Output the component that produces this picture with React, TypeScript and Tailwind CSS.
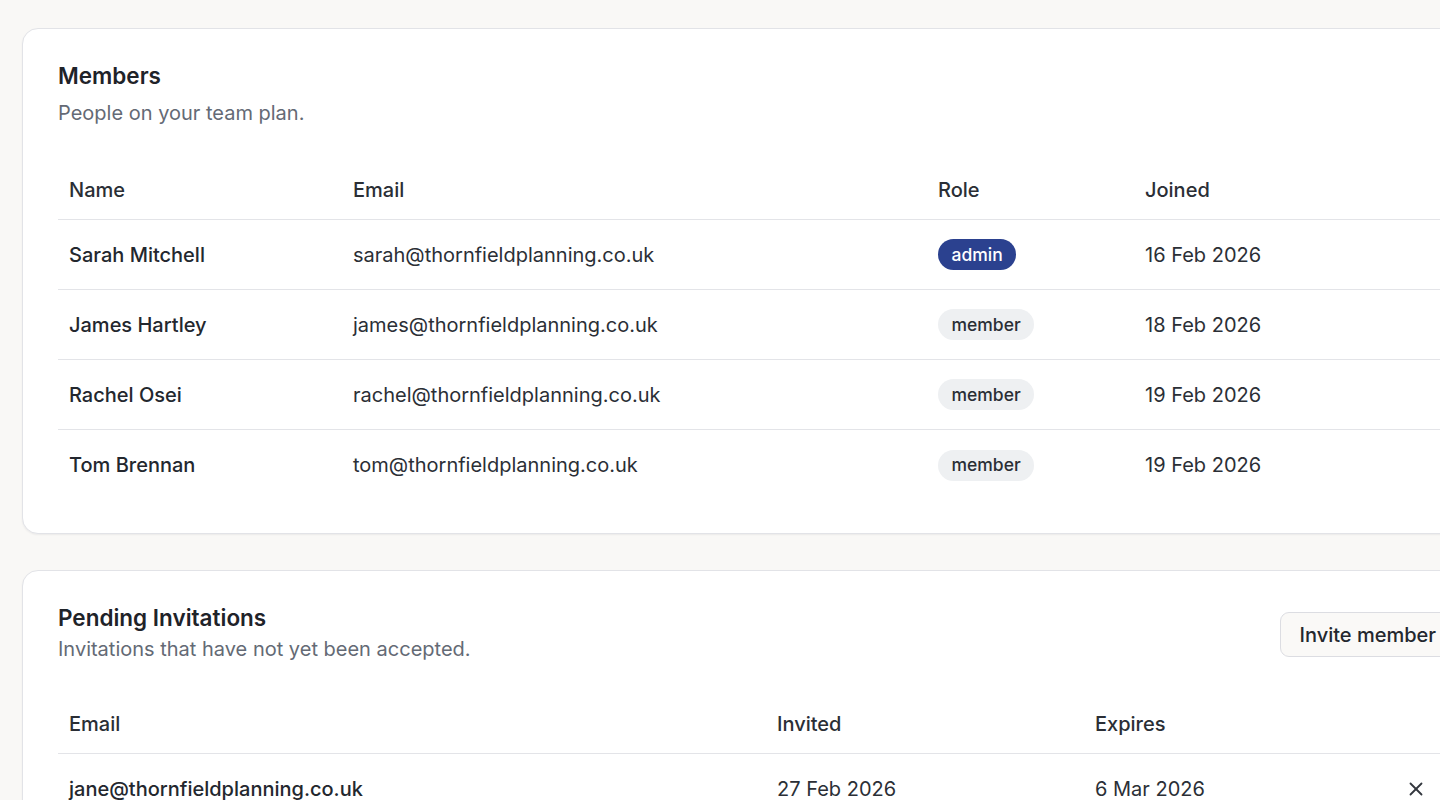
import React from "react";

const members = [
  { name: "Sarah Mitchell", email: "sarah@thornfieldplanning.co.uk", role: "admin", joined: "16 Feb 2026" },
  { name: "James Hartley", email: "james@thornfieldplanning.co.uk", role: "member", joined: "18 Feb 2026" },
  { name: "Rachel Osei", email: "rachel@thornfieldplanning.co.uk", role: "member", joined: "19 Feb 2026" },
  { name: "Tom Brennan", email: "tom@thornfieldplanning.co.uk", role: "member", joined: "19 Feb 2026" },
];

const invites = [{ email: "jane@thornfieldplanning.co.uk", invited: "27 Feb 2026", expires: "6 Mar 2026" }];

function XIcon() {
  return (
    <svg width="22" height="22" viewBox="0 0 24 24" fill="none" stroke="#33373e" strokeWidth="2" strokeLinecap="round" strokeLinejoin="round">
      <path d="M18 6 6 18" />
      <path d="m6 6 12 12" />
    </svg>
  );
}

export default function App() {
  return (
    <div
      className="min-h-screen w-full overflow-hidden bg-[#f9f8f6] pl-[22px] pt-[28px] text-[#1f2937]"
      style={{ fontFamily: "Inter, 'Noto Sans', sans-serif" }}
    >
      <div className="flex w-[1469px] flex-col gap-[36px]">
        {/* Members card */}
        <section className="rounded-[16px] border border-[#e2e3e7] bg-white px-[35px] pb-[33px] pt-[33px] shadow-[0_1px_2px_rgba(16,24,40,0.06)]">
          <h2 className="text-[22.5px] font-semibold leading-[28px] text-[#1f2329]">Members</h2>
          <p className="mt-[9px] text-[20px] leading-[28px] text-[#646a75]">People on your team plan.</p>
          <div className="mt-[34px] text-[20px] leading-[28px]">
            <div className="grid h-[59px] grid-cols-[284px_585px_207px_1fr] items-center border-b border-[#e3e4e8] font-medium text-[#2a2e35]">
              <div className="px-[11px]">Name</div>
              <div className="px-[11px]">Email</div>
              <div className="px-[11px]">Role</div>
              <div className="px-[11px]">Joined</div>
            </div>
            {members.map((m, i) => (
              <div
                key={m.email}
                className={`grid h-[70px] grid-cols-[284px_585px_207px_1fr] items-center ${
                  i < members.length - 1 ? "border-b border-[#e3e4e8]" : ""
                }`}
              >
                <div className="px-[11px] font-medium text-[#23272e]">{m.name}</div>
                <div className="px-[11px] text-[#2b2f36]">{m.email}</div>
                <div className="px-[11px]">
                  {m.role === "admin" ? (
                    <span className="inline-flex h-[31px] items-center rounded-full bg-[#2b418f] px-[13.5px] text-[17.5px] font-medium leading-[20px] text-white">
                      admin
                    </span>
                  ) : (
                    <span className="inline-flex h-[31px] items-center rounded-full bg-[#eef0f2] px-[13.5px] text-[17.5px] font-medium leading-[20px] text-[#2a2e35]">
                      member
                    </span>
                  )}
                </div>
                <div className="px-[11px] text-[#2b2f36]">{m.joined}</div>
              </div>
            ))}
          </div>
        </section>

        {/* Pending invitations card */}
        <section className="rounded-[16px] border border-[#e2e3e7] bg-white px-[35px] pb-[34px] pt-[33px] shadow-[0_1px_2px_rgba(16,24,40,0.06)]">
          <div className="flex items-center justify-between">
            <div>
              <h2 className="text-[22.5px] font-semibold leading-[28px] text-[#1f2329]">Pending Invitations</h2>
              <p className="mt-[3px] text-[20px] leading-[28px] text-[#646a75]">Invitations that have not yet been accepted.</p>
            </div>
            <button className="mt-[2px] h-[45px] rounded-[9px] border border-[#dcdde2] bg-[#faf9f7] px-[18px] text-[20px] font-medium leading-[28px] text-[#23272e]">
              Invite member
            </button>
          </div>
          <div className="mt-[32px] text-[20px] leading-[28px]">
            <div className="grid h-[59px] grid-cols-[708px_318px_250px_1fr] items-center border-b border-[#e3e4e8] font-medium text-[#2a2e35]">
              <div className="px-[11px]">Email</div>
              <div className="px-[11px]">Invited</div>
              <div className="px-[11px]">Expires</div>
              <div className="px-[11px]"></div>
            </div>
            {invites.map((inv) => (
              <div key={inv.email} className="grid h-[70px] grid-cols-[708px_318px_250px_1fr] items-center">
                <div className="px-[11px] font-medium text-[#23272e]">{inv.email}</div>
                <div className="px-[11px] text-[#2b2f36]">{inv.invited}</div>
                <div className="px-[11px] text-[#2b2f36]">{inv.expires}</div>
                <div className="flex justify-end pr-[25px]">
                  <button className="flex h-[28px] w-[28px] items-center justify-center">
                    <XIcon />
                  </button>
                </div>
              </div>
            ))}
          </div>
        </section>
      </div>
    </div>
  );
}
